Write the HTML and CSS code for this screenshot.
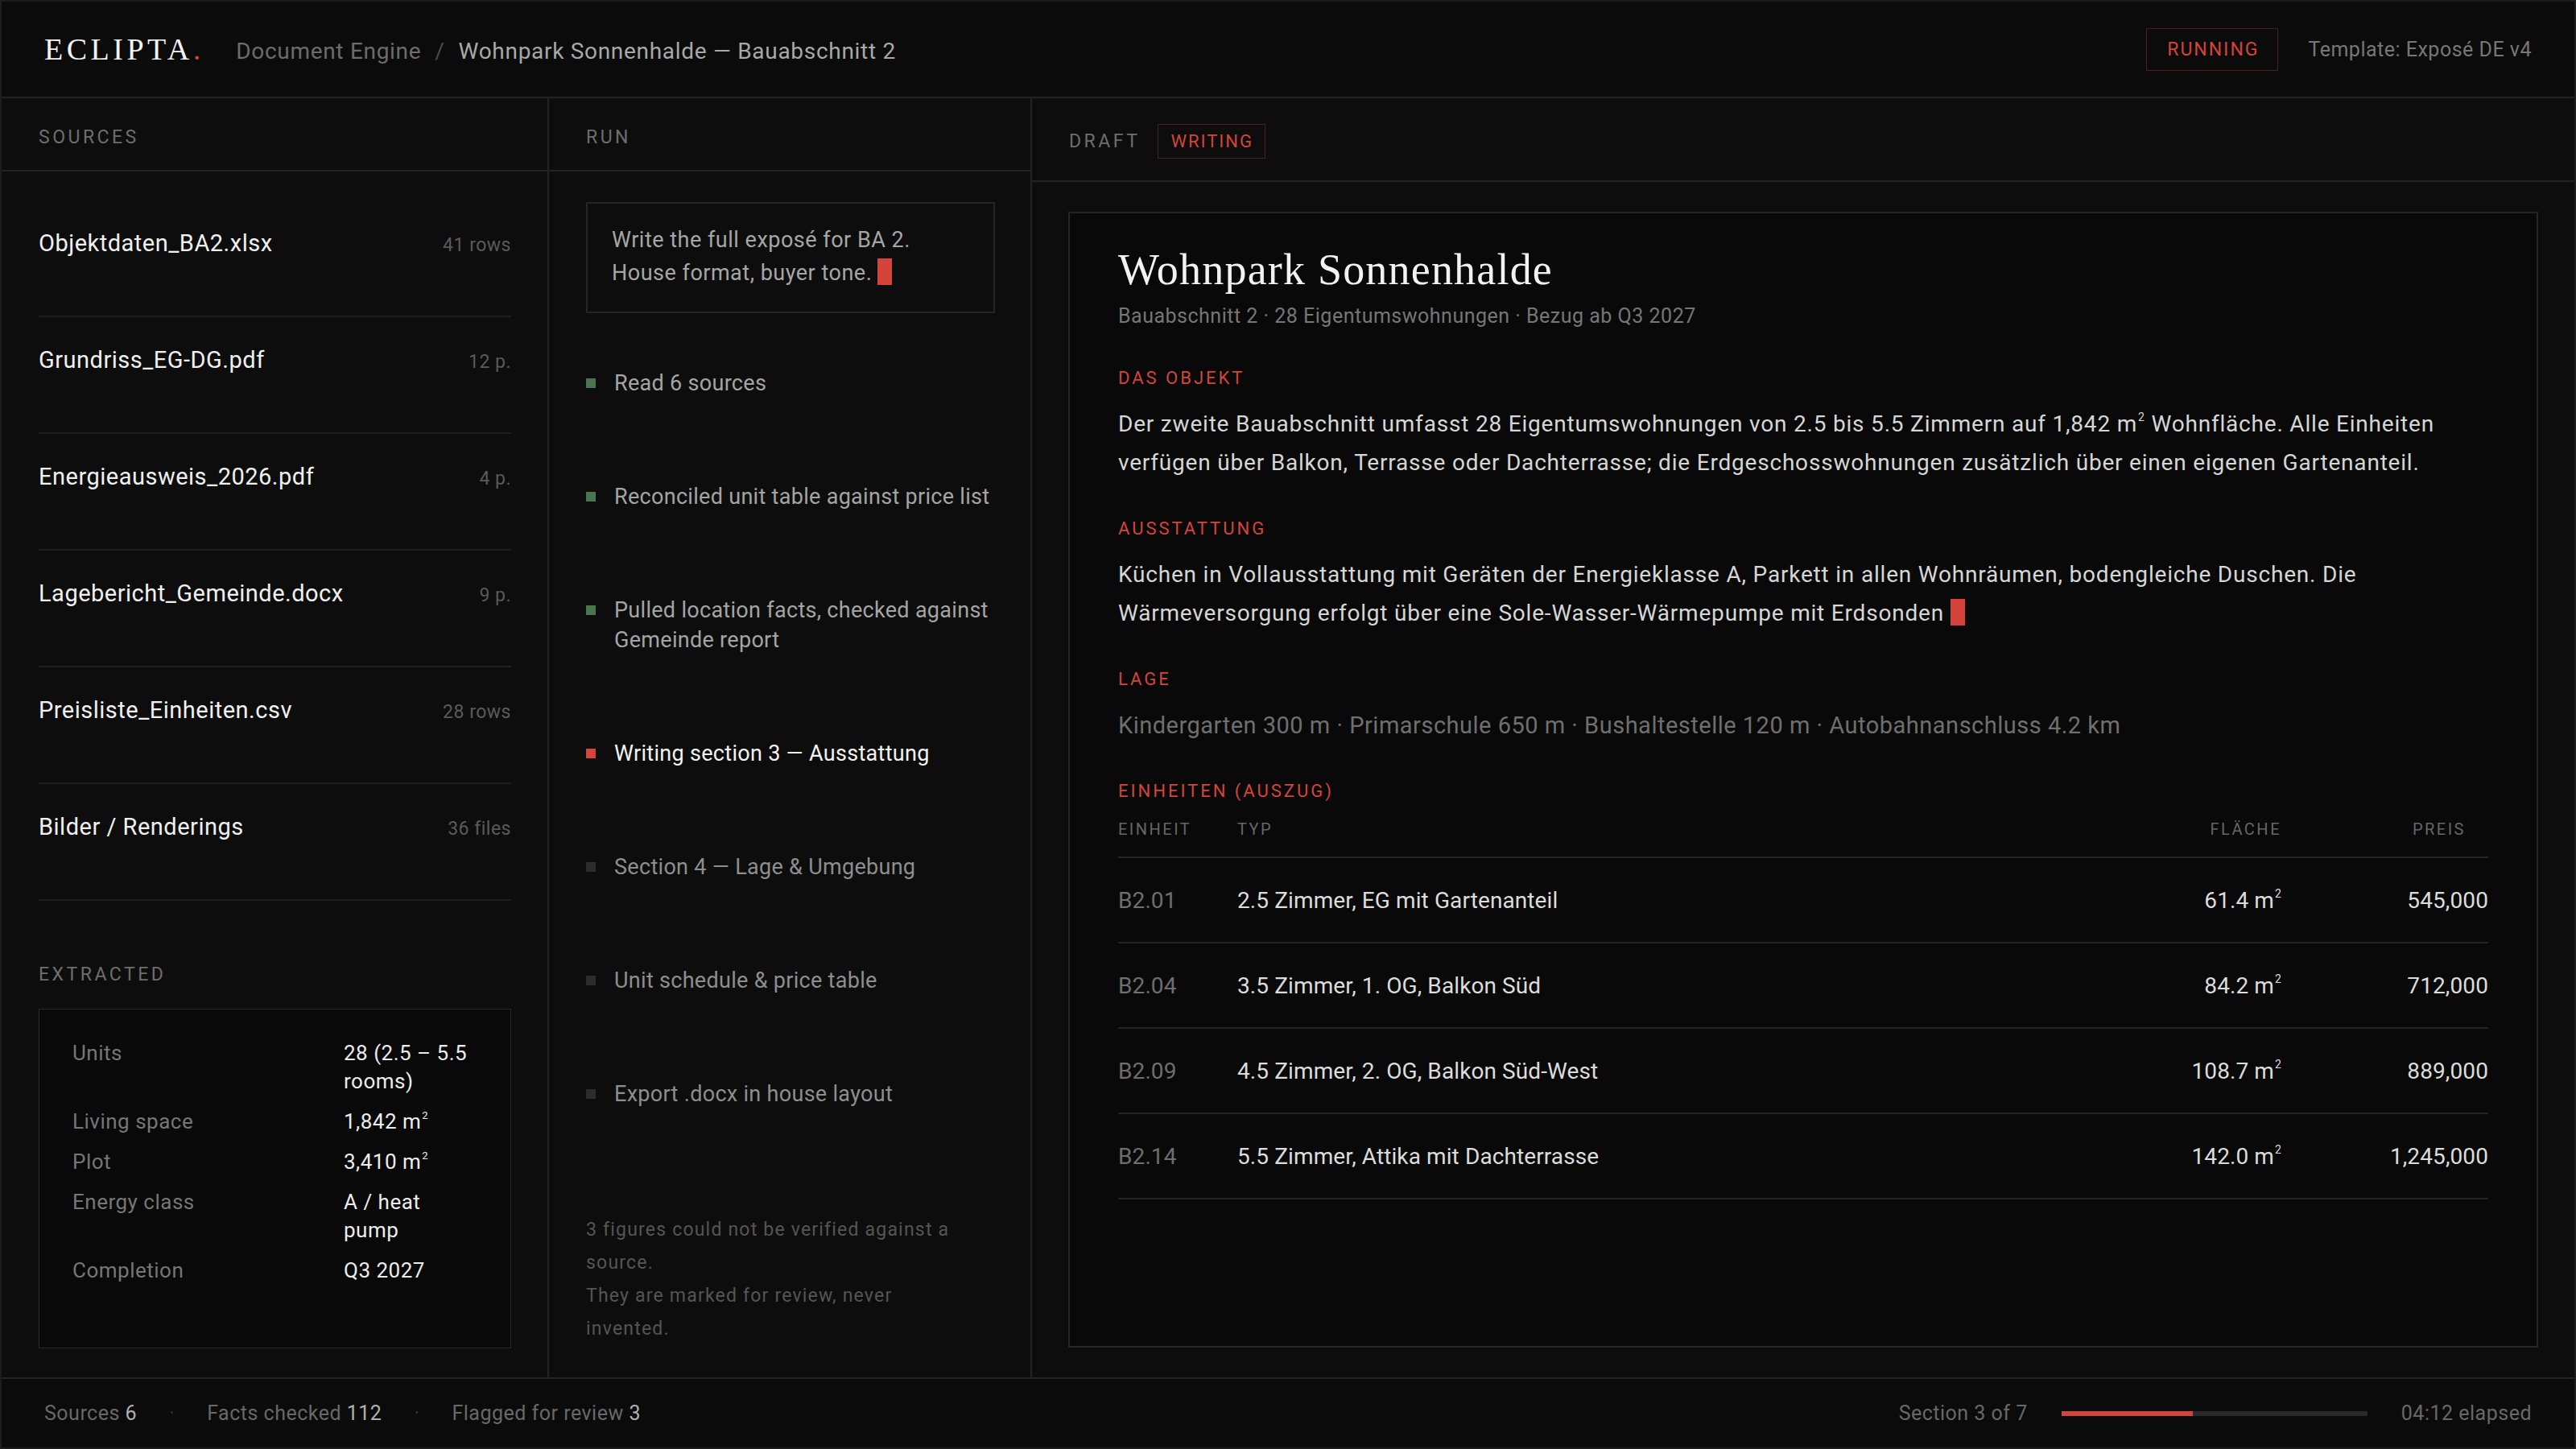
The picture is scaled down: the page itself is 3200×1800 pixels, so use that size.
FILE: index.html
```html
<!DOCTYPE html>
<html lang="en">
<head>
    <meta charset="UTF-8">
    <meta name="viewport" content="width=device-width, initial-scale=1.0">
    <title>Eclipta — Document Engine</title>
    <link rel="stylesheet" href="styles.css">
</head>
<body>
<div class="app">
    <header class="topbar">
        <div class="brand">ECLIPTA<span class="brand-dot">.</span></div>
        <nav class="crumbs">
            <span class="crumb-root">Document Engine</span>
            <span class="crumb-sep">/</span>
            <span class="crumb-current">Wohnpark Sonnenhalde — Bauabschnitt 2</span>
        </nav>
        <div class="topbar-right">
            <span class="badge badge-run">RUNNING</span>
            <span class="template">Template: Exposé DE v4</span>
        </div>
    </header>

    <main class="panes">
        <!-- sources -->
        <section class="pane pane-sources">
            <div class="pane-head"><span class="label">Sources</span></div>
            <ul class="source-list">
                <li class="source"><span class="source-name">Objektdaten_BA2.xlsx</span><span class="source-meta">41 rows</span></li>
                <li class="source"><span class="source-name">Grundriss_EG-DG.pdf</span><span class="source-meta">12 p.</span></li>
                <li class="source"><span class="source-name">Energieausweis_2026.pdf</span><span class="source-meta">4 p.</span></li>
                <li class="source"><span class="source-name">Lagebericht_Gemeinde.docx</span><span class="source-meta">9 p.</span></li>
                <li class="source"><span class="source-name">Preisliste_Einheiten.csv</span><span class="source-meta">28 rows</span></li>
                <li class="source"><span class="source-name">Bilder / Renderings</span><span class="source-meta">36 files</span></li>
            </ul>
            <div class="extracted">
                <div class="label">Extracted</div>
                <dl class="facts">
                    <dt>Units</dt><dd>28 (2.5 – 5.5 rooms)</dd>
                    <dt>Living space</dt><dd>1,842 m<sup>2</sup></dd>
                    <dt>Plot</dt><dd>3,410 m<sup>2</sup></dd>
                    <dt>Energy class</dt><dd>A / heat pump</dd>
                    <dt>Completion</dt><dd>Q3 2027</dd>
                </dl>
            </div>
        </section>

        <!-- run -->
        <section class="pane pane-run">
            <div class="pane-head"><span class="label">Run</span></div>
            <div class="run-body">
                <div class="prompt">Write the full exposé for BA 2.<br>House format, buyer tone. <span class="cursor"></span></div>
                <ul class="steps">
                    <li class="step done">Read 6 sources</li>
                    <li class="step done">Reconciled unit table against price list</li>
                    <li class="step done">Pulled location facts, checked against Gemeinde report</li>
                    <li class="step active">Writing section 3 — Ausstattung</li>
                    <li class="step">Section 4 — Lage &amp; Umgebung</li>
                    <li class="step">Unit schedule &amp; price table</li>
                    <li class="step">Export .docx in house layout</li>
                </ul>
                <p class="run-note">3 figures could not be verified against a source.<br>They are marked for review, never invented.</p>
            </div>
        </section>

        <!-- draft -->
        <section class="pane pane-draft">
            <div class="pane-head draft-head">
                <span class="label">Draft</span>
                <span class="badge badge-writing">WRITING</span>
            </div>
            <article class="doc">
                <h1 class="doc-title">Wohnpark Sonnenhalde</h1>
                <div class="doc-meta">Bauabschnitt 2 · 28 Eigentumswohnungen · Bezug ab Q3 2027</div>

                <h3 class="doc-label">Das Objekt</h3>
                <p class="doc-text">Der zweite Bauabschnitt umfasst 28 Eigentumswohnungen von 2.5 bis 5.5 Zimmern auf 1,842 m<sup>2</sup> Wohnfläche. Alle Einheiten verfügen über Balkon, Terrasse oder Dachterrasse; die Erdgeschosswohnungen zusätzlich über einen eigenen Gartenanteil.</p>

                <h3 class="doc-label">Ausstattung</h3>
                <p class="doc-text">Küchen in Vollausstattung mit Geräten der Energieklasse A, Parkett in allen Wohnräumen, bodengleiche Duschen. Die Wärmeversorgung erfolgt über eine Sole-Wasser-Wärmepumpe mit Erdsonden <span class="cursor"></span></p>

                <h3 class="doc-label">Lage</h3>
                <p class="doc-text muted">Kindergarten 300 m · Primarschule 650 m · Bushaltestelle 120 m · Autobahnanschluss 4.2 km</p>

                <h3 class="doc-label">Einheiten (Auszug)</h3>
                <table class="units">
                    <thead>
                        <tr><th class="col-id">Einheit</th><th>Typ</th><th class="num">Fläche</th><th class="num col-price">Preis</th></tr>
                    </thead>
                    <tbody>
                        <tr><td class="col-id">B2.01</td><td>2.5 Zimmer, EG mit Gartenanteil</td><td class="num">61.4 m<sup>2</sup></td><td class="num col-price">545,000</td></tr>
                        <tr><td class="col-id">B2.04</td><td>3.5 Zimmer, 1. OG, Balkon Süd</td><td class="num">84.2 m<sup>2</sup></td><td class="num col-price">712,000</td></tr>
                        <tr><td class="col-id">B2.09</td><td>4.5 Zimmer, 2. OG, Balkon Süd-West</td><td class="num">108.7 m<sup>2</sup></td><td class="num col-price">889,000</td></tr>
                        <tr><td class="col-id">B2.14</td><td>5.5 Zimmer, Attika mit Dachterrasse</td><td class="num">142.0 m<sup>2</sup></td><td class="num col-price">1,245,000</td></tr>
                    </tbody>
                </table>
            </article>
        </section>
    </main>

    <footer class="statusbar">
        <div class="stats">
            <span class="stat">Sources <b>6</b></span>
            <span class="stat-sep">·</span>
            <span class="stat">Facts checked <b>112</b></span>
            <span class="stat-sep">·</span>
            <span class="stat">Flagged for review <b>3</b></span>
        </div>
        <div class="progress">
            <span>Section 3 of 7</span>
            <div class="bar"><div class="bar-fill" style="width: 43%"></div></div>
            <span>04:12 elapsed</span>
        </div>
    </footer>
</div>
</body>
</html>
```

FILE: styles.css
```css
* {
    box-sizing: border-box;
}
body {
    margin: 0;
    background: #0c0c0c;
    color: #e6e6e6;
    font-family: Roboto, "Liberation Sans", sans-serif;
    letter-spacing: 0.5px;
}
.app {
    width: 3200px;
    height: 1800px;
    border: 2px solid #1d1d1d;
    display: flex;
    flex-direction: column;
    background: #0d0d0d;
}

/* top bar */
.topbar {
    height: 120px;
    flex: none;
    display: flex;
    align-items: center;
    padding: 0 53px;
    background: #0b0b0b;
    border-bottom: 2px solid #232323;
}
.brand {
    font-family: "Liberation Serif", serif;
    font-size: 38px;
    letter-spacing: 4.5px;
    color: #f2f2f2;
}
.brand-dot {
    color: #d4443a;
    letter-spacing: 0;
}
.crumbs {
    margin-left: 44px;
    font-size: 28px;
    letter-spacing: 0.7px;
    display: flex;
    gap: 17px;
    padding-top: 4px;
}
.crumb-root {
    color: #6c6c6c;
}
.crumb-sep {
    color: #4a4a4a;
}
.crumb-current {
    color: #a8a8a8;
}
.topbar-right {
    margin-left: auto;
    display: flex;
    align-items: center;
    gap: 37px;
}
.badge {
    border: 1px solid #4d1f1a;
    color: #d4443a;
    letter-spacing: 2px;
}
.badge-run {
    font-size: 23px;
    line-height: 25px;
    padding: 13px 23px 13px 25px;
}
.template {
    color: #777;
    font-size: 25px;
}

/* panes */
.panes {
    flex: 1;
    display: grid;
    grid-template-columns: 680px 600px 1fr;
    min-height: 0;
}
.pane {
    display: flex;
    flex-direction: column;
    min-height: 0;
}
.pane-sources, .pane-run {
    border-right: 2px solid #232323;
}
.pane-head {
    padding: 34px 46px 25px;
    border-bottom: 2px solid #232323;
}
.label {
    font-size: 23px;
    line-height: 30px;
    letter-spacing: 3.5px;
    text-transform: uppercase;
    color: #6e6e6e;
}

/* sources */
.source-list {
    list-style: none;
    margin: 0;
    padding: 36px 45px 0 46px;
}
.source {
    display: flex;
    justify-content: space-between;
    align-items: baseline;
    padding: 33px 0 70px;
    border-bottom: 2px solid #1f1f1f;
}
.source-name {
    font-size: 29px;
    line-height: 40px;
    color: #f0f0f0;
}
.source-meta {
    font-size: 23px;
    color: #5a5a5a;
}
.extracted {
    flex: 1;
    display: flex;
    flex-direction: column;
    padding: 77px 45px 36px 46px;
}
.facts {
    flex: 1;
    margin: 27px 0 0;
    padding: 37px 43px 37px 41px;
    background: #090909;
    border: 1px solid #2a2a2a;
    display: grid;
    grid-template-columns: 337px 1fr;
    align-content: start;
    row-gap: 15px;
    font-size: 26px;
    line-height: 35px;
}
.facts dt {
    color: #767676;
}
.facts dd {
    margin: 0;
    color: #ececec;
}
sup {
    font-size: 0.5em;
    line-height: 0;
    vertical-align: 0.9em;
    margin-left: 1px;
}

/* run */
.run-body {
    flex: 1;
    display: flex;
    flex-direction: column;
    padding: 38px 42px 40px 46px;
}
.prompt {
    border: 2px solid #252525;
    margin-right: 2px;
    padding: 25px 30px 27px 30px;
    font-size: 27px;
    line-height: 41px;
    color: #a6a6a6;
}
.cursor {
    display: inline-block;
    width: 18px;
    height: 33px;
    background: #d4443a;
    vertical-align: -6px;
}
.steps {
    list-style: none;
    margin: 69px 0 0;
    padding: 0;
    display: flex;
    flex-direction: column;
    gap: 104px;
}
.step {
    position: relative;
    padding-left: 35px;
    font-size: 27px;
    line-height: 37px;
    letter-spacing: 0.3px;
    color: #8e8e8e;
}
.step::before {
    content: "";
    position: absolute;
    left: 0;
    top: 12px;
    width: 12px;
    height: 12px;
    background: #2c2c2c;
}
.step.done {
    color: #a4a4a4;
}
.step.done::before {
    background: #4d7450;
}
.step.active {
    color: #f2f2f2;
}
.step.active::before {
    background: #d4443a;
}
.run-note {
    margin: auto 0 0;
    max-width: 470px;
    font-size: 23px;
    line-height: 41px;
    letter-spacing: 1.2px;
    color: #555;
}

/* draft */
.draft-head {
    display: flex;
    align-items: center;
    gap: 22px;
    padding: 32px 46px 27px;
}
.badge-writing {
    font-size: 22px;
    line-height: 25px;
    padding: 8px 14px 8px 15px;
}
.doc {
    flex: 1;
    margin: 37px 45px 37px 45px;
    padding: 40px 60px;
    background: #090909;
    border: 2px solid #262626;
}
.doc-title {
    margin: 0;
    font-family: "Liberation Serif", serif;
    font-weight: normal;
    font-size: 54px;
    line-height: 60px;
    letter-spacing: 1.2px;
    color: #f2f2f2;
}
.doc-meta {
    margin-top: 11px;
    font-size: 25px;
    line-height: 34px;
    color: #767676;
}
.doc-label {
    margin: 43px 0 0;
    font-size: 22px;
    line-height: 30px;
    font-weight: normal;
    letter-spacing: 3px;
    text-transform: uppercase;
    color: #d4443a;
}
.doc-meta + .doc-label {
    margin-top: 45px;
}
.doc-text {
    margin: 18px 0 0;
    font-size: 28px;
    line-height: 48px;
    letter-spacing: 0.8px;
    color: #d6d6d6;
}
.doc-text.muted {
    font-size: 29px;
    letter-spacing: 0.5px;
    color: #6f6f6f;
}
.units {
    width: 100%;
    margin-top: 18px;
    border-collapse: collapse;
}
.units th {
    text-align: left;
    font-weight: normal;
    font-size: 20px;
    line-height: 28px;
    letter-spacing: 2.5px;
    text-transform: uppercase;
    color: #666;
    padding: 0 0 20px;
    border-bottom: 2px solid #262626;
}
.units td {
    height: 106px;
    font-size: 28px;
    letter-spacing: 0.1px;
    color: #dcdcdc;
    border-bottom: 2px solid #222;
    padding: 0;
}
.units .col-id {
    width: 148px;
}
.units td.col-id {
    color: #6e6e6e;
}
.units .num {
    text-align: right;
    width: 220px;
}
.units .col-price {
    width: 257px;
}
.units th.col-price {
    padding-right: 28px;
}

/* status bar */
.statusbar {
    height: 87px;
    flex: none;
    display: flex;
    align-items: center;
    justify-content: space-between;
    padding: 0 53px;
    border-top: 2px solid #232323;
    background: #0b0b0b;
    font-size: 25px;
    color: #686868;
}
.stats {
    display: flex;
    align-items: center;
}
.stat b {
    font-weight: normal;
    color: #b0b0b0;
}
.stat-sep {
    color: #333;
    margin: 0 40px;
}
.progress {
    display: flex;
    align-items: center;
    gap: 42px;
}
.bar {
    width: 380px;
    height: 6px;
    background: #2a2a2a;
}
.bar-fill {
    height: 100%;
    background: #d4443a;
}
```
